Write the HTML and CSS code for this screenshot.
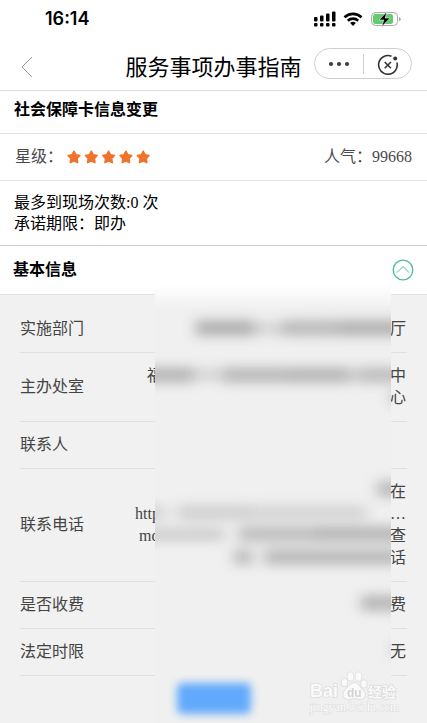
FILE: index.html
```html
<!DOCTYPE html>
<html lang="zh-CN">
<head>
<meta charset="utf-8">
<meta name="viewport" content="width=device-width, initial-scale=1">
<title>服务事项办事指南</title>
<link rel="stylesheet" href="styles.css">
</head>
<body>
<div class="page">
  <div class="status">
    <span class="time">16:14</span>
    <svg class="status-icons" width="88" height="18" viewBox="0 0 88 18" aria-hidden="true">
      <g fill="#000">
        <rect x="1" y="7" width="3.5" height="4.500" rx="1"/>
        <rect x="7" y="5.500" width="3.500" height="6" rx="1"/>
        <rect x="13" y="3.500" width="3.500" height="8" rx="1"/>
        <rect x="19" y="1.500" width="3.500" height="10" rx="1"/>
        <rect x="1" y="13" width="3.500" height="3.500" rx="1"/>
        <rect x="7" y="13" width="3.500" height="3.500" rx="1"/>
        <rect x="13" y="13" width="3.500" height="3.500" rx="1"/>
        <rect x="19" y="13" width="3.500" height="3.500" rx="1"/>
      </g>
      <g fill="none" stroke="#000" stroke-width="2.600">
        <path d="M31.500 7.300a12.200 12.200 0 0 1 17 0"/>
        <path d="M34.800 10.700a7.600 7.600 0 0 1 10.400 0"/>
      </g>
      <path d="M37.200 13.100a4 4 0 0 1 5.600 0L40 16z" fill="#000"/>
      <rect x="58.500" y="2.500" width="26" height="13" rx="4" fill="#fff" stroke="#a9a9a9"/>
      <rect x="60" y="4" width="20" height="10" rx="2.500" fill="#62cb6b"/>
      <path d="M86 7v4.500q1.800-.8 1.800-2.200T86 7z" fill="#a9a9a9"/>
      <path d="M74 1.500l-8 8.500h4.800l-2.300 7 8.700-9h-5z" fill="#000" stroke="#fff" stroke-width=".6"/>
    </svg>
  </div>

  <header class="nav">
    <button class="back" type="button" aria-label="返回">
      <svg width="14" height="22" viewBox="0 0 14 22"><path d="M12 1L2 11l10 10" fill="none" stroke="#999"/></svg>
    </button>
    <h1>服务事项办事指南</h1>
    <div class="capsule">
      <button type="button" aria-label="更多">
        <svg width="22" height="6" viewBox="0 0 22 6" fill="#333"><circle cx="3" cy="3" r="2"/><circle cx="11" cy="3" r="2"/><circle cx="19" cy="3" r="2"/></svg>
      </button>
      <button type="button" aria-label="关闭">
        <svg width="22" height="22" viewBox="0 0 22 22" fill="none" stroke="#333" stroke-width="1.600"><path d="M14.500 2.300A9.300 9.300 0 1 0 19.900 8.500M7.700 8l6.200 6.200M13.900 8l-6.200 6.200"/><circle cx="18.200" cy="4.500" r="2" fill="#333" stroke="none"/></svg>
      </button>
    </div>
  </header>

  <main>
    <h2 class="item-name">社会保障卡信息变更</h2>
    <div class="rating">
      <span>星级：</span>
      <svg class="stars" width="84" height="14" viewBox="0 0 84 14" role="img" aria-label="五星">
        <defs><path id="star" d="M7 1.200l1.900 3.500 4 .8-2.700 3.100.5 4.100L7 11.200l-3.700 1.500.5-4.100-2.700-3.100 4-.8z" fill="#f0732d" stroke="#f0732d" stroke-width="1.400" stroke-linejoin="round"/></defs>
        <use href="#star"/><use href="#star" x="17.300"/><use href="#star" x="34.600"/><use href="#star" x="51.900"/><use href="#star" x="69.200"/>
      </svg>
      <span class="views">人气：99668</span>
    </div>
    <div class="promise">
      <p>最多到现场次数:0 次</p>
      <p>承诺期限：即办</p>
    </div>
    <div class="section-head">
      <h2>基本信息</h2>
      <button class="toggle" type="button" aria-label="收起">
        <svg width="22" height="22" viewBox="0 0 22 22" fill="none" stroke="#4dbd98"><circle cx="11" cy="11" r="9.800" stroke-width="1.300"/><path d="M5 13.500l6-6 6 6"/></svg>
      </button>
    </div>

    <section class="details">
      <dl>
        <div class="row"><dt>实施部门</dt><dd>厅</dd></div>
        <div class="row"><dt>主办处室</dt><dd><span class="split office"><span>福</span><span>中</span></span>心</dd></div>
        <div class="row"><dt>联系人</dt><dd></dd></div>
        <div class="row"><dt>联系电话</dt><dd>在<span class="split link"><span>http:</span><span>…</span></span><span class="split host"><span>mo</span><span>查</span></span>话</dd></div>
        <div class="row"><dt>是否收费</dt><dd>费</dd></div>
        <div class="row"><dt>法定时限</dt><dd>无</dd></div>
      </dl>
      <div class="veil" aria-hidden="true">
        <svg width="100%" height="438" viewBox="0 0 236 438" preserveAspectRatio="none">
          <defs>
            <filter id="soft" filterUnits="userSpaceOnUse" x="-40" y="0" width="320" height="438" color-interpolation-filters="sRGB"><feGaussianBlur stdDeviation="7 6"/></filter>
          </defs>
          <g filter="url(#soft)" fill="#a4a4a4">
            <rect x="41" y="35" width="58" height="16" opacity=".85"/>
            <rect x="99" y="37" width="28" height="13" opacity=".35"/>
            <rect x="127" y="35" width="58" height="16" opacity=".7"/>
            <rect x="185" y="35" width="65" height="16" opacity=".8"/>
            <rect x="-14" y="82" width="52" height="16" opacity=".75"/>
            <rect x="38" y="83" width="30" height="13" opacity=".35"/>
            <rect x="68" y="82" width="66" height="16" opacity=".7"/>
            <rect x="134" y="82" width="60" height="16" opacity=".75"/>
            <rect x="194" y="83" width="10" height="14" opacity=".4"/>
            <rect x="204" y="82" width="48" height="16" opacity=".65"/>
            <rect x="236" y="105" width="16" height="15" opacity=".6"/>
            <rect x="222" y="196" width="28" height="16" opacity=".7"/>
            <rect x="-12" y="221" width="22" height="14" opacity=".4"/>
            <rect x="22" y="220" width="74" height="15" opacity=".42"/>
            <rect x="96" y="220" width="116" height="15" opacity=".35"/>
            <rect x="-12" y="243" width="82" height="13" opacity=".45"/>
            <rect x="84" y="241" width="76" height="16" opacity=".65"/>
            <rect x="160" y="241" width="90" height="16" opacity=".75"/>
            <rect x="79" y="264" width="18" height="16" opacity=".7"/>
            <rect x="109" y="264" width="141" height="16" opacity=".7"/>
            <rect x="206" y="310" width="44" height="16" opacity=".75"/>
            <rect x="238" y="357" width="14" height="15" opacity=".5"/>
          </g>
        </svg>
      </div>
      <button class="action" type="button" aria-label="办理"></button>
      <svg class="brand" width="96" height="46" viewBox="0 0 96 46" role="img" aria-label="Baidu 经验">
        <g fill="#fafafa" stroke="#dcdcdc" stroke-width="1.600" paint-order="stroke">
          <text class="brand-latin" x="2" y="26">Bai</text>
          <ellipse cx="36.500" cy="11.500" rx="2.800" ry="3.800"/>
          <ellipse cx="42.500" cy="5.500" rx="3" ry="4.200"/>
          <ellipse cx="50.500" cy="5.500" rx="3" ry="4.200"/>
          <ellipse cx="56" cy="13" rx="2.800" ry="3.800"/>
          <path d="M46.500 12c4 0 5 4 8 7 5 4 2 9-2 9-3 0-4-1-6-1s-3 1-6 1c-5 0-7-5-3-9 3-3 5-7 9-7z"/>
          <text class="brand-cjk" x="60" y="26">经验</text>
          <text class="brand-url" x="2" y="40" stroke-width="1">jingyan.baidu.com</text>
        </g>
        <text class="brand-du" x="39" y="26" fill="#d2d2d2">du</text>
      </svg>
    </section>
  </main>
</div>
</body>
</html>
```

FILE: styles.css
```css
* {
  box-sizing: border-box;
}

body {
  margin: 0;
  background: #fff;
  color: #000;
  font-family: "Liberation Serif", "Noto Sans CJK SC", serif;
  font-size: 16px;
  line-height: 22px;
}

h1, h2, p, dl, dd {
  margin: 0;
}

button {
  padding: 0;
  border: 0;
  background: none;
}

svg {
  display: block;
}

.page {
  display: flex;
  flex-direction: column;
  min-height: 100vh;
}

.status {
  display: flex;
  align-items: center;
  justify-content: space-between;
  height: 38px;
  padding: 0 26px 0 45px;
}

.time {
  font: 600 18px/22px Inter, sans-serif;
}

.nav {
  display: grid;
  grid-template-columns: 1fr auto 1fr;
  align-items: center;
  height: 53px;
  padding: 6px 15px 0;
  border-bottom: 1px solid #dedede;
}

.back {
  justify-self: start;
  padding-left: 5px;
}

.nav h1 {
  padding-top: 2px;
  font-size: 22px;
  font-weight: 400;
  line-height: 30px;
}

.capsule {
  display: grid;
  grid-template-columns: 1fr 1fr;
  align-self: start;
  justify-self: end;
  width: 98px;
  height: 31px;
  margin-top: 4px;
  border: 1px solid #cfcfcf;
  border-radius: 16px;
}

.capsule button {
  display: grid;
  place-items: center;
}

.capsule button + button {
  height: 20px;
  align-self: center;
  border-left: 1px solid #cfcfcf;
}

main {
  display: flex;
  flex: 1;
  flex-direction: column;
}

h2 {
  font-size: 16px;
  font-weight: 700;
}

.item-name {
  padding: 8px 14px 12px;
  border-bottom: 1px solid #e3e3e3;
}

.rating {
  display: flex;
  align-items: center;
  padding: 12px 15px;
  border-bottom: 1px solid #e3e3e3;
  color: #4a4a4a;
}

.stars {
  margin-left: 4px;
}

.views {
  margin-left: auto;
}

.promise {
  padding: 11px 14px;
  border-bottom: 1px solid #cfcfcf;
  line-height: 21px;
}

.section-head {
  display: flex;
  align-items: center;
  justify-content: space-between;
  padding: 13px;
  border-bottom: 1px solid #e3e3e3;
}

.details {
  position: relative;
  flex: 1;
  padding: 11px 20px 10px;
  background: #f1f1f1;
  color: #444;
}

.row {
  display: flex;
  align-items: center;
  justify-content: space-between;
  min-height: 47px;
  padding: 12px 1px 12px 0;
  border-bottom: 1px solid #e0e0e0;
}

dd {
  text-align: right;
}

.split {
  display: flex;
  justify-content: space-between;
  margin-left: auto;
}

.office {
  width: 259px;
}

.link {
  width: 271px;
}

.host {
  width: 267px;
}

.veil {
  position: absolute;
  top: -10px;
  right: 36px;
  bottom: 0;
  left: 155px;
  overflow: hidden;
  background: linear-gradient(#fff, #f0f0f0 24px);
}

.action {
  position: relative;
  display: block;
  width: 74px;
  height: 31px;
  margin: 7px auto 0;
  border-radius: 5px;
  background: #62a9fb;
  filter: blur(4px);
}

.brand {
  position: absolute;
  right: 23px;
  bottom: 7px;
}

.brand text {
  font-family: "Liberation Sans", "Noto Sans CJK SC", sans-serif;
}

.brand .brand-latin {
  font-size: 18px;
  font-weight: 700;
}

.brand .brand-cjk {
  font-size: 14px;
  font-weight: 700;
}

.brand .brand-url {
  font-family: "Liberation Serif", serif;
  font-size: 12px;
}

.brand .brand-du {
  font-size: 12px;
  font-weight: 700;
}
```
